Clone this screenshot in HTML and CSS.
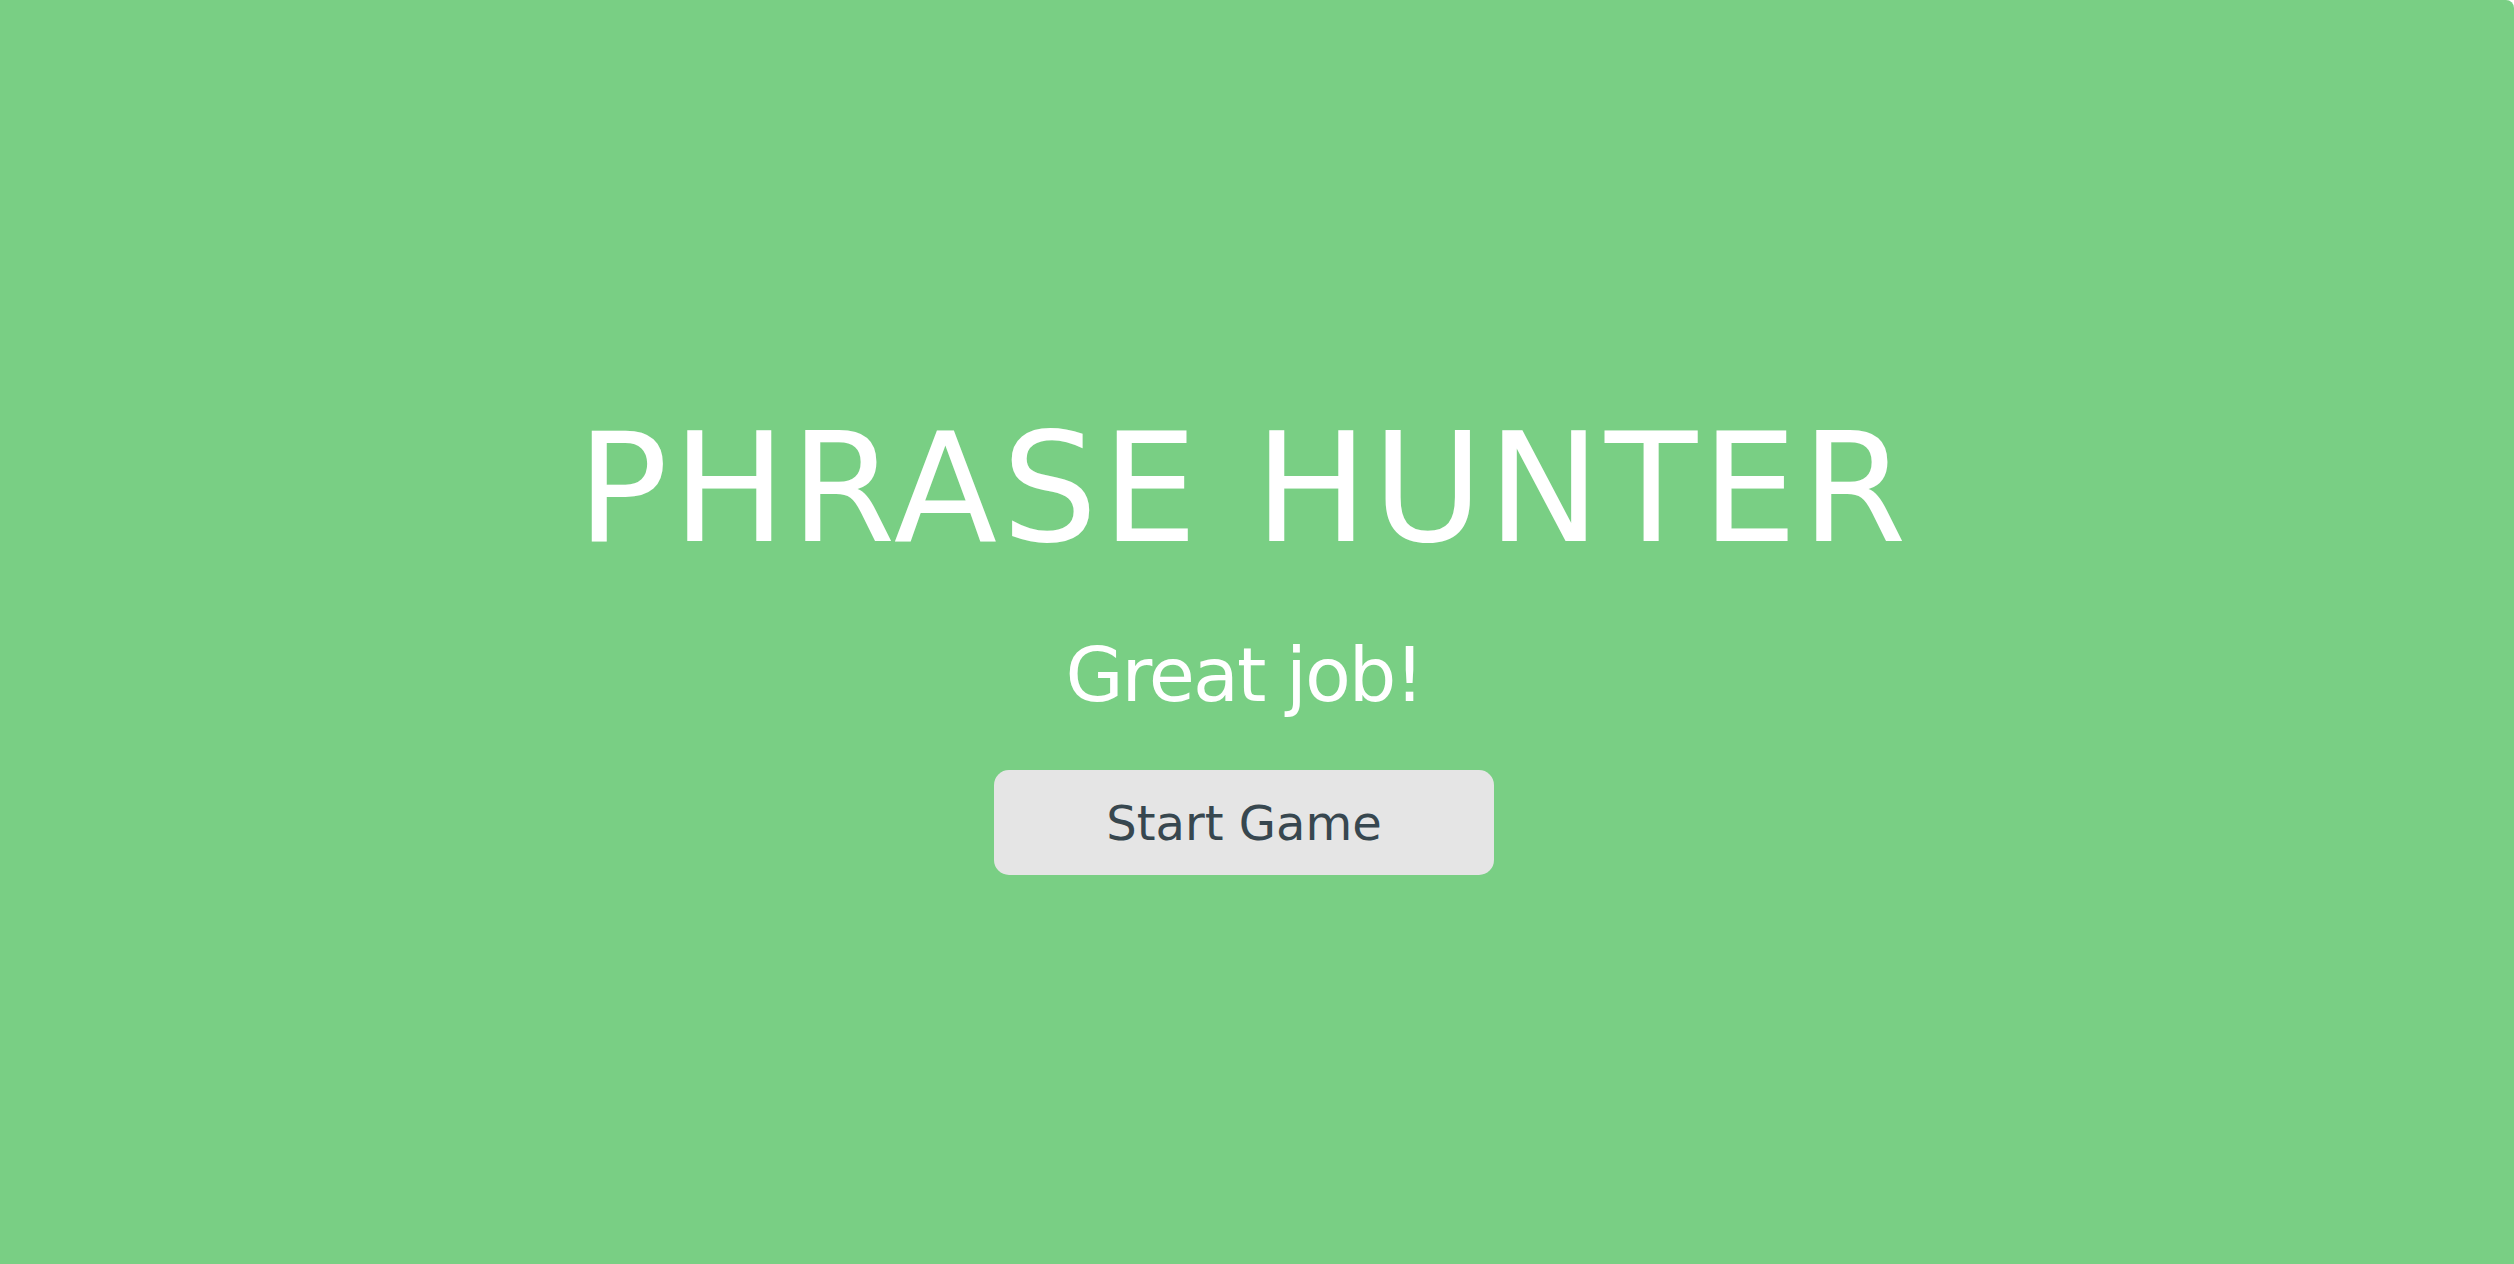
FILE: index.html
```html
<!DOCTYPE html>
<html lang="en">
<head>
<meta charset="utf-8">
<title>Phrase Hunter</title>
<link rel="stylesheet" href="styles.css">
</head>
<body>
  <div class="overlay win">
    <h1 class="title">PHRASE HUNTER</h1>
    <h2 class="game-over-message">Great job!</h2>
    <button class="btn-reset">Start Game</button>
  </div>
</body>
</html>
```
FILE: styles.css
```css
html, body {
  margin: 0;
  padding: 0;
  background: #ffffff;
}

body {
  font-family: "DejaVu Sans", "Open Sans", sans-serif;
}

.overlay {
  width: 2514px;
  height: 1264px;
  box-sizing: border-box;
  padding: 414px 26px 0 0;
  display: flex;
  flex-direction: column;
  align-items: center;
  border-top-right-radius: 8px;
}

.win {
  background-color: #79cf84;
}

.title {
  margin: 0;
  font-size: 151px;
  line-height: 1;
  font-weight: normal;
  letter-spacing: 4.5px;
  color: #ffffff;
  white-space: nowrap;
}

.game-over-message {
  margin: 73px 0 0 0;
  font-size: 75px;
  line-height: 1;
  font-weight: normal;
  letter-spacing: -2px;
  color: #ffffff;
}

.btn-reset {
  margin-top: 57px;
  width: 500px;
  height: 105px;
  border: none;
  border-radius: 15px;
  background: #e5e5e5;
  color: #37474f;
  font-family: "DejaVu Sans", "Open Sans", sans-serif;
  font-size: 48px;
  line-height: 1;
  padding: 0;
  display: flex;
  align-items: center;
  justify-content: center;
}
```
